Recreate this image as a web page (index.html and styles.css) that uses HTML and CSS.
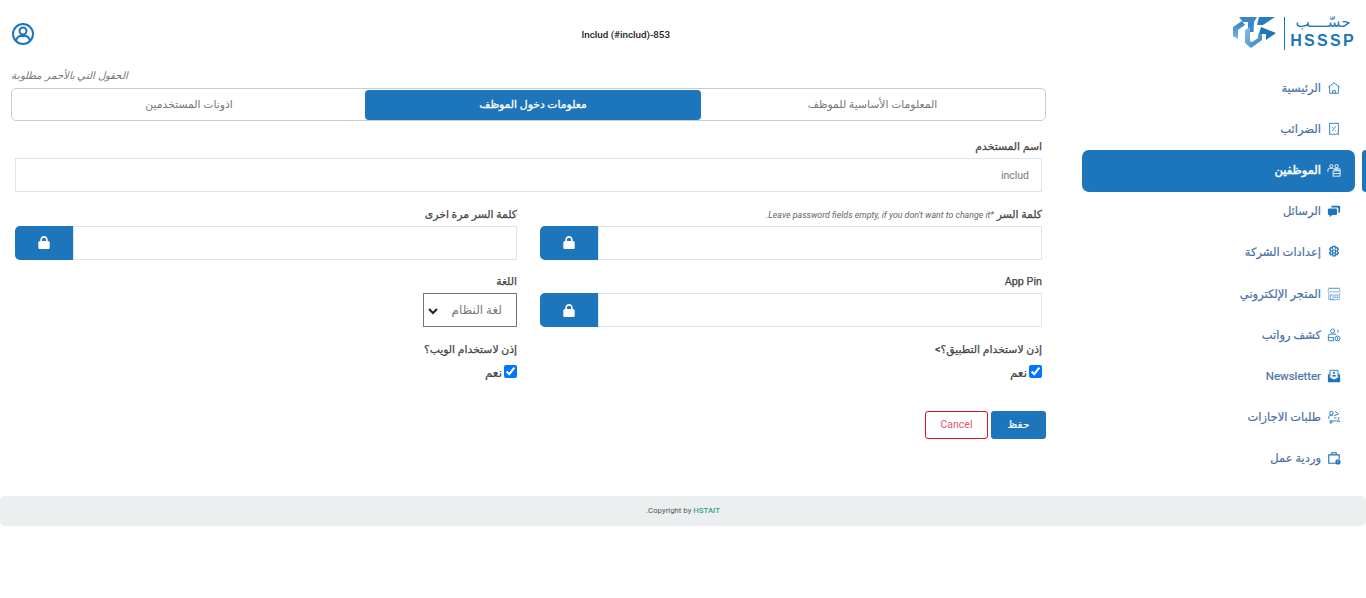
FILE: index.html
```html
<!DOCTYPE html>
<html lang="ar" dir="rtl">
<head>
<meta charset="utf-8">
<title>HSSSP</title>
<link rel="stylesheet" href="styles.css">
</head>
<body>
<div class="layout">
  <aside class="sidebar">
    <div class="logo">
      <div class="logo-words">
        <span class="logo-ar">حسّــــب</span>
        <span class="logo-en" dir="ltr">HSSSP</span>
      </div>
      <span class="logo-rule"></span>
      <svg class="logo-mark" width="44" height="35" viewBox="0 0 44 35">
        <defs>
          <linearGradient id="lg1" x1="0" y1="0" x2="0" y2="1"><stop offset="0" stop-color="#2f80c4"/><stop offset="1" stop-color="#7fb5e0"/></linearGradient>
          <linearGradient id="lg2" x1="0" y1="0" x2="1" y2="1"><stop offset="0" stop-color="#8fc0e6"/><stop offset="1" stop-color="#2f80c4"/></linearGradient>
        </defs>
        <polygon fill="#3a87c8" points="6,2 24,2 21,7 20.500,17 15,17 15,7 10,7"/>
        <polygon fill="#2a7cc0" points="26,2 42,2 30,10 24,10"/>
        <polygon fill="#1d75bb" points="28,12 43,18 33,25 33,19 26,19"/>
        <polygon fill="url(#lg2)" points="25,19 29,19 29,25 18,33 12,28 12,15 17,12 17,26 19,27 25,23"/>
        <polygon fill="url(#lg1)" points="0,12 9,6 12,10 5,15 5,24 0,21"/>
      </svg>
    </div>
    <nav class="nav">
      <a class="nav-item"><svg class="ico" viewBox="0 0 16 16" fill="none" stroke="#1d75bb"><path d="M1.500 7 8 2l6.500 5M3 6v8h10V6"/><path d="M6.500 14v-3h3v3"/></svg><span>الرئيسية</span></a>
      <a class="nav-item"><svg class="ico" viewBox="0 0 16 16" fill="none" stroke="#1d75bb"><path d="M3 1.500h10v13l-1.700-1-1.600 1-1.700-1-1.700 1-1.600-1-1.700 1z"/><path d="m6 10 4-5M6 6h.8M9.200 9.500h.8"/></svg><span>الضرائب</span></a>
      <a class="nav-item active"><svg class="ico" viewBox="0 0 16 16" fill="none" stroke="#fff"><circle cx="5" cy="3.500" r="1.800"/><circle cx="11" cy="3.500" r="1.800"/><path d="M1 10V8q0-2 2-2h4q2 0 2 2M9 6h4q2 0 2 2v1"/><rect x="7" y="9" width="8" height="6"/><path d="M9 9V7.500h4V9M7 12h8"/></svg><span>الموظفين</span></a>
      <a class="nav-item"><svg class="ico" viewBox="0 0 16 16" fill="#1d75bb"><path d="M5 2h8.500Q15 2 15 3.500v5q0 1.500-1.500 1.500H13V5.500Q13 4 11.500 4H5z"/><path d="M2.500 5h7.500Q11.500 5 11.500 6.500v4.500Q11.500 12.500 10 12.500H6L3 15v-2.500h-.5Q1 12.500 1 11V6.500Q1 5 2.500 5z"/></svg><span>الرسائل</span></a>
      <a class="nav-item"><svg class="ico" viewBox="0 0 16 16" fill="none" stroke="#1d75bb" stroke-width="1.500"><path d="m6.700 1.500h2.600l.5 2 1.900-.6 1.300 2.200-1.400 1.500 0 .8 1.400 1.500-1.300 2.200-1.900-.6-.5 2h-2.600l-.5-2-1.900.6-1.300-2.200 1.400-1.500 0-.8-1.400-1.500 1.300-2.200 1.900.6z"/><circle cx="8" cy="7.500" r="2"/></svg><span>إعدادات الشركة</span></a>
      <a class="nav-item"><svg class="ico" viewBox="0 0 16 16" fill="none" stroke="#6ea6d6"><path d="M2 1.500h12M1 5l1-3.500h12L15 5M1 5q1 2 2.300 0 1.400 2 2.400 0 1.300 2 2.300 0 1 2 2.300 0 1 2 2.400 0 1.300 2 2.300 0M2 7v7.500h12V7"/><rect x="4" y="9" width="3" height="5.500"/><rect x="9" y="9" width="3" height="3"/></svg><span>المتجر الإلكتروني</span></a>
      <a class="nav-item"><svg class="ico" viewBox="0 0 16 16" fill="none" stroke="#1d75bb"><circle cx="6.500" cy="3.500" r="2.300"/><path d="M1.500 11V9q0-2 2.500-2h5q1.500 0 2 1"/><path d="M1.500 11h6v3.500h-6z"/><circle cx="12" cy="12" r="2.800"/><path d="M12 10.500v3M12.500 2v3.500"/></svg><span>كشف رواتب</span></a>
      <a class="nav-item"><svg class="ico" viewBox="0 0 16 16"><path fill="#1d75bb" d="M1 6.500 3 5v4.500L8 12l5-2.500V5l2 1.500V15H1z"/><path fill="none" stroke="#1d75bb" d="M3.500 9V1.500h9V9"/><path fill="#1d75bb" d="M8 3a1.300 1.300 0 1 1 0 2.600A1.300 1.300 0 0 1 8 3zM5.500 8.500q0-2 2.500-2t2.500 2z"/></svg><span>Newsletter</span></a>
      <a class="nav-item"><svg class="ico" viewBox="0 0 16 16" fill="none" stroke="#1d75bb"><circle cx="5" cy="3.500" r="2"/><path d="M2 10V8q0-2 3-2h2M9 1.500l4 3-5 2M3 12.500h8"/><circle cx="4.500" cy="14" r="1.200"/><path d="M14 8l-2 5h3M8 9h3"/></svg><span>طلبات الاجازات</span></a>
      <a class="nav-item"><svg class="ico" viewBox="0 0 16 16"><path fill="none" stroke="#1d75bb" stroke-width="1.300" d="M10 14H2V4.500h12V9M5.500 4.500V2h5v2.500"/><circle fill="#1d75bb" cx="12.500" cy="12.500" r="3"/><path stroke="#fff" d="M12.500 11v2"/></svg><span>وردية عمل</span></a>
    </nav>
  </aside>
  <main class="main">
    <header class="topbar">
      <span class="page-title" dir="ltr">Includ (#includ)-853</span>
      <svg class="profile" width="24" height="24" viewBox="0 0 24 24" fill="none" stroke="#1d75bb" stroke-width="2"><circle cx="12" cy="12" r="10"/><circle cx="12" cy="9" r="3.500"/><path d="M5 19q1-5 5-5h4q4 0 5 5"/></svg>
    </header>
    <p class="note">الحقول التي بالأحمر مطلوبة</p>
    <div class="tabs">
      <a class="tab tab-basic">المعلومات الأساسية للموظف</a>
      <a class="tab tab-login on">معلومات دخول الموظف</a>
      <a class="tab tab-perm">اذونات المستخدمين</a>
    </div>
    <form class="form">
      <div class="field">
        <label class="lbl">اسم المستخدم</label>
        <input class="input" type="text" value="includ">
      </div>
      <div class="grid">
        <div class="field">
          <label class="lbl">كلمة السر <small class="hint">*Leave password fields empty, if you don't want to change it.</small></label>
          <div class="group"><input class="input" type="password"><span class="addon"><svg width="12" height="13" viewBox="0 0 448 512" fill="#fff"><path d="M144 144v48H304V144c0-44.200-35.800-80-80-80s-80 35.800-80 80zM80 192V144C80 64.500 144.500 0 224 0s144 64.500 144 144v48h16c35.300 0 64 28.700 64 64V448c0 35.300-28.700 64-64 64H64c-35.300 0-64-28.700-64-64V256c0-35.300 28.700-64 64-64H80z"/></svg></span></div>
        </div>
        <div class="field">
          <label class="lbl">كلمة السر مرة اخرى</label>
          <div class="group"><input class="input" type="password"><span class="addon"><svg width="12" height="13" viewBox="0 0 448 512" fill="#fff"><path d="M144 144v48H304V144c0-44.200-35.800-80-80-80s-80 35.800-80 80zM80 192V144C80 64.500 144.500 0 224 0s144 64.500 144 144v48h16c35.300 0 64 28.700 64 64V448c0 35.300-28.700 64-64 64H64c-35.300 0-64-28.700-64-64V256c0-35.300 28.700-64 64-64H80z"/></svg></span></div>
        </div>
        <div class="field">
          <label class="lbl">App Pin</label>
          <div class="group"><input class="input" type="password"><span class="addon"><svg width="12" height="13" viewBox="0 0 448 512" fill="#fff"><path d="M144 144v48H304V144c0-44.200-35.800-80-80-80s-80 35.800-80 80zM80 192V144C80 64.500 144.500 0 224 0s144 64.500 144 144v48h16c35.300 0 64 28.700 64 64V448c0 35.300-28.700 64-64 64H64c-35.300 0-64-28.700-64-64V256c0-35.300 28.700-64 64-64H80z"/></svg></span></div>
        </div>
        <div class="field">
          <label class="lbl">اللغة</label>
          <select class="select"><option>لغة النظام</option></select>
        </div>
        <div class="field">
          <label class="lbl">إذن لاستخدام التطبيق؟&gt;</label>
          <label class="check"><input type="checkbox" checked>نعم</label>
        </div>
        <div class="field">
          <label class="lbl">إذن لاستخدام الويب؟</label>
          <label class="check"><input type="checkbox" checked>نعم</label>
        </div>
      </div>
      <div class="actions">
        <button class="btn btn-save" type="button">حفظ</button>
        <button class="btn btn-cancel" type="button">Cancel</button>
      </div>
    </form>
  </main>
</div>
<footer class="footer">Copyright by <b class="brand">HSTAIT</b>.</footer>
</body>
</html>
```
FILE: styles.css
```css
* { box-sizing: border-box; }
html, body { margin: 0; padding: 0; }
body {
  background: #fff;
  color: #444;
  font-family: Roboto, "Noto Sans", "DejaVu Sans", sans-serif;
  font-size: 11px;
  height: 598px;
  overflow: hidden;
}
.layout { display: flex; height: 496px; }

.sidebar { width: 284px; flex: none; }
.logo {
  height: 68px;
  padding: 15px 10px 0 0;
  display: flex;
  align-items: flex-start;
  gap: 5px;
}
.logo-words { display: flex; flex-direction: column; align-items: center; width: 66px; height: 33px; justify-content: space-between; }
.logo-ar { font-size: 15px; line-height: 15px; color: #1d75bb; white-space: nowrap; }
.logo-en { font-size: 16px; line-height: 15px; font-weight: 700; letter-spacing: 2.300px; color: #1d75bb; font-family: "Liberation Sans", sans-serif; }
.logo-rule { width: 1px; height: 33px; margin-top: 2px; background: #1d75bb; }
.logo-mark { margin-right: 2px; }

.nav { display: flex; flex-direction: column; }
.nav-item {
  position: relative;
  height: 41.200px;
  margin-right: 11px;
  padding: 0 14px 2px 0;
  display: flex;
  align-items: center;
  gap: 6px;
  color: #4a6fa8;
  font-size: 11.500px;
  -webkit-text-stroke: 0.2px #4a6fa8;
  border-radius: 7px;
}
.ico { width: 14px; height: 14px; flex: none; }
.nav-item.active { background: #1d75bb; color: #fff; -webkit-text-stroke: 0.5px #fff; }
.nav-item.active::before {
  content: "";
  position: absolute;
  top: 0;
  bottom: 0;
  right: -11px;
  width: 4px;
  background: #1d75bb;
  border-top-left-radius: 5px;
  border-bottom-left-radius: 5px;
}

.main { flex: 1; min-width: 0; padding: 0 36px 0 11px; }
.topbar { height: 68px; display: flex; align-items: center; }
.page-title { margin-right: 376px; font-size: 9.800px; font-weight: 500; color: #222; }
.profile { margin-right: auto; }
.note { margin: 0; height: 20px; line-height: 16px; font-size: 10.300px; font-style: italic; color: #777; text-align: left; }

.tabs {
  display: flex;
  height: 33px;
  padding: 1px 1px 0;
  border: 1px solid #ccc;
  border-radius: 5px;
}
.tab {
  display: flex;
  align-items: center;
  justify-content: center;
  padding-bottom: 2px;
  font-size: 10.800px;
  color: #777;
  border-radius: 4px;
}
.tab-basic { width: 343px; }
.tab-login { width: 336px; }
.tab-perm { flex: 1; }
.tab.on { background: #1d75bb; color: #fff; -webkit-text-stroke: 0.3px #fff; }

.form { padding: 17px 4px 0; }
.field { min-width: 0; }
.lbl { display: block; height: 16px; padding-top: 1px; line-height: 16px; margin-bottom: 4px; font-size: 10.800px; -webkit-text-stroke: 0.25px #444; color: #444; white-space: nowrap; }
.hint { font-size: 8.800px; font-weight: 400; font-style: italic; color: #666; -webkit-text-stroke: 0; }
.input {
  display: block;
  width: 100%;
  height: 34px;
  padding: 0 12px;
  border: 1px solid #dbe5ee;
  border-radius: 0;
  background: #fff;
  color: #777;
  font: inherit;
  font-size: 10.500px;
  outline: 0;
}
.grid { display: grid; grid-template-columns: 502px 502px; column-gap: 23px; row-gap: 13.500px; margin-top: 13.500px; }
.group { display: flex; }
.group .input { flex: 1; min-width: 0; }
.addon {
  width: 58px;
  height: 34px;
  flex: none;
  display: flex;
  align-items: center;
  justify-content: center;
  background: #1d75bb;
  border-top-left-radius: 5px;
  border-bottom-left-radius: 5px;
}
.select {
  appearance: none;
  display: block;
  width: 94px;
  height: 34px;
  padding: 0 14px 0 8px;
  border: 1px solid #767676;
  background: #fff url("data:image/svg+xml,%3Csvg xmlns='http://www.w3.org/2000/svg' width='10' height='7' viewBox='0 0 10 7'%3E%3Cpath d='M1 1l4 4 4-4' fill='none' stroke='%23222' stroke-width='2'/%3E%3C/svg%3E") no-repeat 4px 14px;
  color: #777;
  font: inherit;
  font-size: 12px;
}
.check { display: flex; align-items: flex-start; gap: 2px; height: 20px; line-height: 24px; font-size: 12px; -webkit-text-stroke: 0.2px #444; color: #444; }
.check input { margin: 4px 0 0; width: 13px; height: 13px; }

.actions { display: flex; gap: 3px; margin: 30px -4px 0 0; }
.btn { height: 28px; border-radius: 3px; font: inherit; font-size: 10.500px; cursor: pointer; padding: 0; }
.btn-save { width: 55px; background: #1d75bb; border: 0; color: #fff; -webkit-text-stroke: 0.2px #fff; }
.btn-cancel { width: 63px; background: #fff; border: 1px solid #d9121f; color: #e0566a; }

.footer {
  height: 30px;
  line-height: 29px;
  text-align: center;
  background: #eceff0;
  border-radius: 5px;
  font-size: 7.800px;
  color: #555;
}
.brand { color: #2fa58e; font-weight: 500; }
```
